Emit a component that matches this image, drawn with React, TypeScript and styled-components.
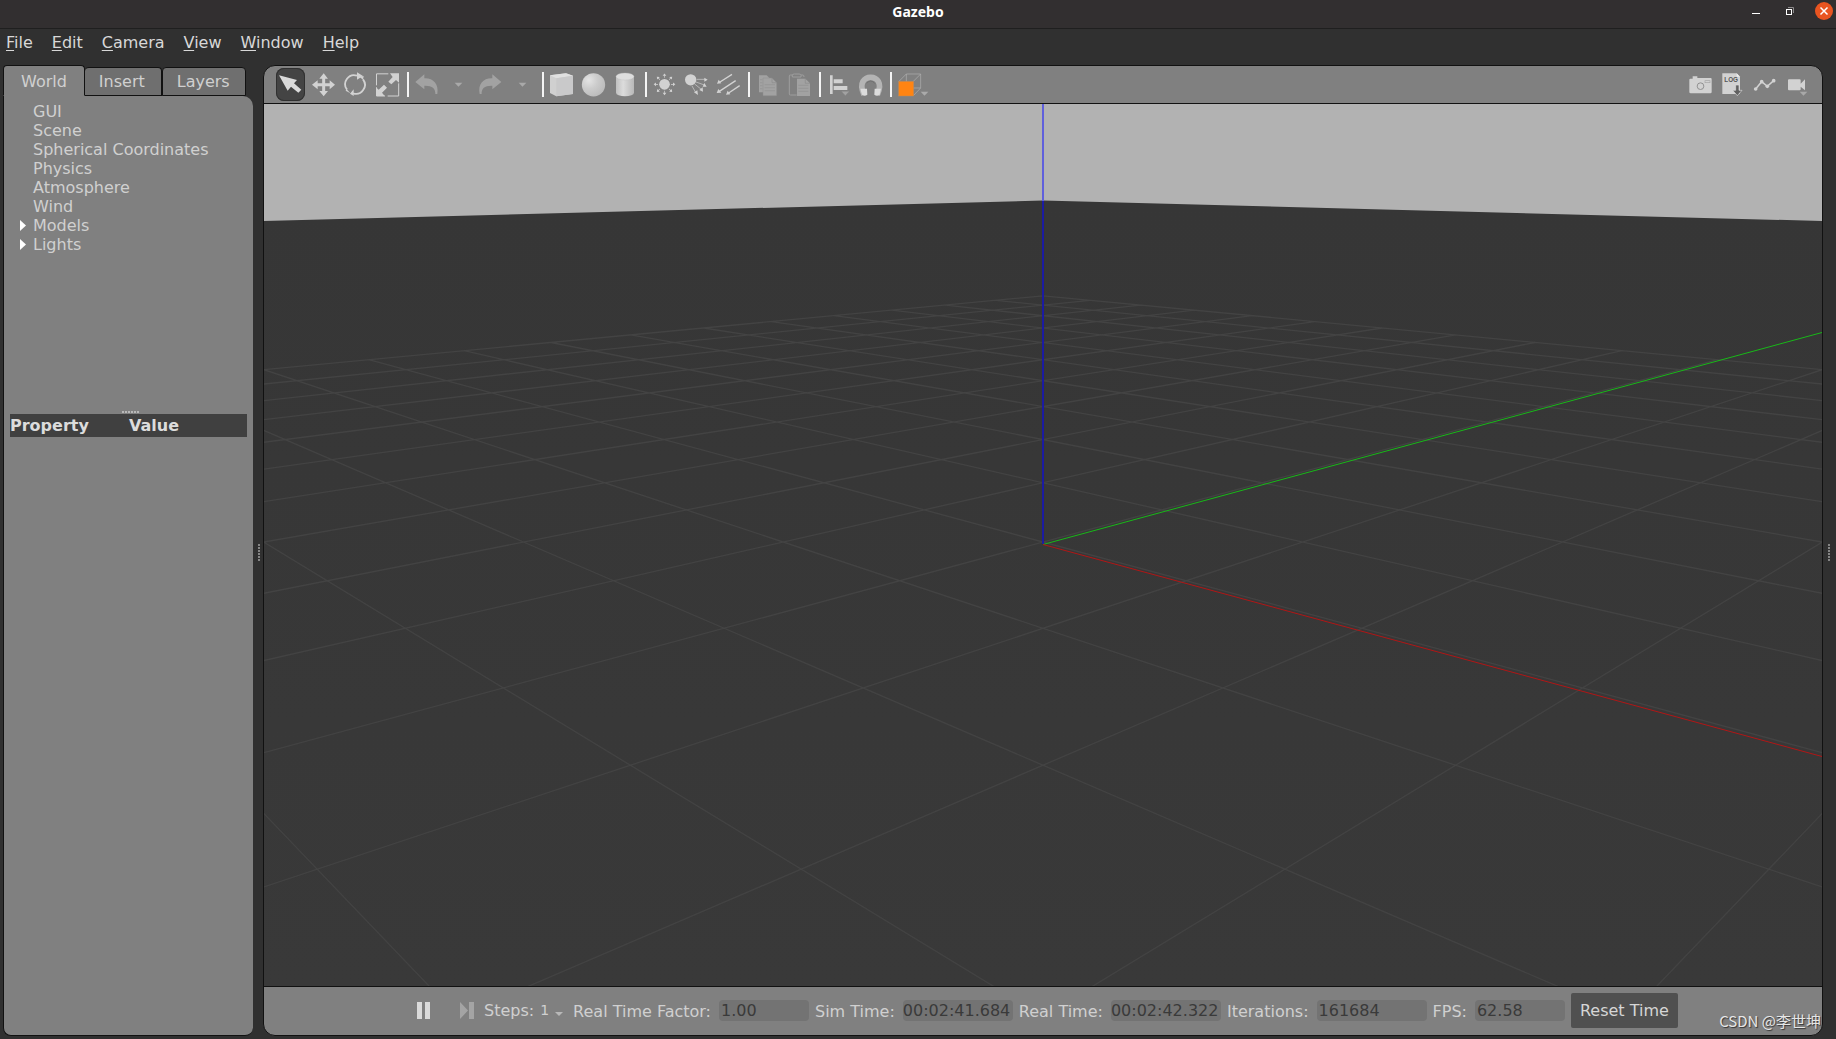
import React from "react";
import styled, { createGlobalStyle, css } from "styled-components";

const GlobalStyle = createGlobalStyle`
  *, *::before, *::after { box-sizing: border-box; }
  html, body { margin: 0; padding: 0; }
  body {
    background: #303030;
    color: #d0d0d0;
    font-family: "DejaVu Sans", sans-serif;
    font-size: 16px;
    line-height: 19px;
  }
  button, input {
    margin: 0;
    padding: 0;
    border: 0;
    background: none;
    color: inherit;
    font: inherit;
  }
  svg { display: block; flex: none; }
`;

const EDGE = "#111111";
const PANEL = "#808080";

/* ---------- window frame ---------- */

const Window = styled.div`
  display: flex;
  flex-direction: column;
  min-height: 100vh;
  background: #303030;
`;

const TitleBar = styled.header`
  display: grid;
  grid-template-columns: 1fr auto 1fr;
  height: 29px;
  padding-bottom: 8px;
  align-items: center;
  background: #322f30;
  border-bottom: 1px solid #1f1f1f;
`;

const Title = styled.h1`
  grid-column: 2;
  margin: 0;
  padding-top: 2px;
  color: #ffffff;
  font-family: "Noto Sans", sans-serif;
  font-size: 14px;
  font-weight: 700;
  line-height: 20px;
`;

const WindowControls = styled.div`
  display: flex;
  justify-content: flex-end;
  align-items: center;
  gap: 14px;
  padding-right: 2px;
`;

const WindowButton = styled.button`
  display: block;
  width: 20px;
  height: 20px;
`;

const MenuBar = styled.nav`
  display: flex;
  gap: 19px;
  height: 36px;
  padding: 2px 6px 0;
  align-items: flex-start;
`;

const MenuItem = styled.button`
  height: 22px;
  color: #d8d8d8;
  &::first-letter {
    text-decoration: underline;
    text-decoration-thickness: 1px;
    text-underline-offset: 2px;
  }
`;

const Body = styled.div`
  display: flex;
  flex: 1;
  padding: 0 0 3px 3px;
`;

/* ---------- left side ---------- */

const Side = styled.aside`
  display: flex;
  flex-direction: column;
  width: 250px;
  flex: none;
`;

const Tabs = styled.div`
  display: flex;
  align-items: flex-end;
  height: 31px;
`;

const Tab = styled.button<{ $active?: boolean; $first?: boolean }>`
  height: 29px;
  padding: 0 15px 0 14px;
  background: #6f6f6f;
  border: 1px solid ${EDGE};
  border-left-width: ${(p) => (p.$first ? 0 : 1)}px;
  border-radius: 4px 4px 0 0;
  ${(p) =>
    p.$first &&
    css`
      padding: 0 16px 0 14px;
    `}
  ${(p) =>
    p.$active &&
    css`
      height: 31px;
      padding: 2px 17px 0;
      background: ${PANEL};
      border-bottom-color: ${PANEL};
      border-left-width: 1px;
    `}
`;

const SidePanel = styled.div`
  display: flex;
  flex: 1;
  flex-direction: column;
  background: ${PANEL};
  border-left: 1px solid ${EDGE};
  border-bottom: 1px solid ${EDGE};
  border-radius: 0 10px 8px 8px;
  padding: 6px 6px 0;
`;

const Tree = styled.ul`
  height: 308px;
  margin: 0;
  padding: 0;
  list-style: none;
`;

const TreeRow = styled.li`
  display: grid;
  grid-template-columns: 13px 1fr;
  padding-left: 10px;
  height: 19px;
  align-items: center;
`;

const Expander = styled.button`
  width: 6px;
  height: 11px;
`;

const HandleDots = styled.div<{ $vertical?: boolean }>`
  width: ${(p) => (p.$vertical ? 2 : 17)}px;
  height: ${(p) => (p.$vertical ? 17 : 2)}px;
  background: repeating-linear-gradient(
    ${(p) => (p.$vertical ? "180deg" : "90deg")},
    ${(p) => (p.$vertical ? "#858585" : "#b8b8b8")} 0 2px,
    transparent 2px 3px
  );
`;

const RowSplitter = styled.div`
  display: flex;
  justify-content: center;
  height: 4px;
  padding: 1px 0 0 3px;
`;

const ColumnSplitter = styled.div<{ $width: number }>`
  display: flex;
  flex: none;
  align-items: center;
  width: ${(p) => p.$width}px;
  padding: 4px 0 0 5px;
`;

const Properties = styled.table`
  width: 100%;
  border-collapse: collapse;
  table-layout: fixed;
  background: #404040;
`;

const PropertyHead = styled.th<{ $wide?: boolean }>`
  width: ${(p) => (p.$wide ? "50%" : "119px")};
  height: 23px;
  padding: 0;
  color: #dcdcdc;
  font-weight: 700;
  text-align: left;
`;

/* ---------- main area ---------- */

const Main = styled.main`
  display: flex;
  flex: 1;
  min-width: 0;
  flex-direction: column;
  border: 1px solid ${EDGE};
  border-radius: 12px;
  overflow: hidden;
  background: ${PANEL};
`;

const ToolBar = styled.div`
  display: flex;
  align-items: center;
  height: 38px;
  padding: 0 9px 0 12px;
  border-bottom: 1px solid ${EDGE};
`;

const ToolButton = styled.button<{ $active?: boolean; $wide?: boolean }>`
  display: flex;
  flex: none;
  width: ${(p) => (p.$wide ? 36 : 32)}px;
  height: 33px;
  ${(p) =>
    p.$active &&
    css`
      width: 29px;
      margin-right: 3px;
      background: #444444;
      border-radius: 8px;
      box-shadow: inset 0 0 0 1px #303030;
    `}
`;

const Separator = styled.div`
  flex: none;
  width: 2px;
  height: 25px;
  margin: 0 2px 0 3px;
  background: #f4f4f4;
`;

const Spacer = styled.div`
  flex: 1;
`;

const Viewport = styled.div`
  display: flex;
  flex: 1;
  min-height: 200px;
  svg {
    flex: 1;
    width: 100%;
    height: auto;
    min-width: 0;
  }
`;

const StatusBar = styled.footer`
  position: relative;
  display: flex;
  align-items: center;
  gap: 6px;
  height: 49px;
  padding: 0 0 2px 144px;
  border-top: 1px solid ${EDGE};
  white-space: nowrap;
`;

const PlayButton = styled.button`
  width: 32px;
  height: 32px;
`;

const StepsButton = styled.button`
  display: flex;
  align-items: center;
  gap: 6px;
  margin-right: 4px;
`;

const StepCount = styled.span`
  font-size: 14px;
`;

const StatLabel = styled.label`
  padding: 2px 2px 0 0;
`;

const StatValue = styled.input<{ $width: number; $tight?: boolean }>`
  width: ${(p) => p.$width}px;
  height: 21px;
  padding: 0 ${(p) => (p.$tight ? 0 : 2)}px;
  background: #737373;
  border-radius: 4px;
  color: #3a3a3a;
`;

const ResetButton = styled.button`
  height: 35px;
  padding: 0 9px;
  background: #505050;
  border-radius: 2px;
  color: #d6d6d6;
`;

const Watermark = styled.span`
  position: absolute;
  right: 1px;
  bottom: 4px;
  color: #e6e6e6;
  font-family: "Noto Sans CJK SC", sans-serif;
  font-size: 15px;
  line-height: 20px;
  text-shadow: 1px 1px 1px #333333;
`;

/* ---------- icons ---------- */

const LIGHT = "#d2d2d2";
const DIM = "#a2a2a2";

const Icon = ({ x, y = 38, w = 32, children }: { x: number; y?: number; w?: number; children: React.ReactNode }) => (
  <svg width={w} height={33} viewBox={`${x} ${y} ${w * 3} 99`} aria-hidden="true">
    {children}
  </svg>
);

const CursorIcon = () => (
  <Icon x={63} w={29}>
    <path d="M72 60 L126 74 L117 84 L139 103 L130 112 L108 94 L98 106 Z" fill="#dadada" />
  </Icon>
);

const MoveIcon = () => (
  <Icon x={159}>
    <path
      d="M206 54 L219 70 H210.500 V84 H224 V75 L240 88.500 L224 102 V93 H210.500 V107 H219 L206 123 L193 107 H201.500 V93 H188 V102 L171 88.500 L188 75 V84 H201.500 V70 H193 Z"
      fill={LIGHT}
    />
  </Icon>
);

const RotateIcon = () => (
  <Icon x={255}>
    <g fill="none" stroke={LIGHT} strokeWidth="5.500">
      <path d="M276 103 A27 27 0 0 1 306 61" />
      <path d="M324 72 A27 27 0 0 1 294 114" />
    </g>
    <path d="M306 51 L324 62 L306 73 Z M296 102 L285 115 L296 122 Z" fill={LIGHT} />
    <path d="M313 64 L326 62 L324 73 Z" fill={LIGHT} />
    <path d="M274 100 L286 114 L272 106 Z" fill={LIGHT} />
  </Icon>
);

const ScaleIcon = () => (
  <Icon x={351}>
    <path d="M400 55.500 H364.500 V90 M364.500 96 V122 H390 M398 122 H431 V84 M431 122" fill="none" stroke={LIGHT} strokeWidth="3" />
    <path d="M432 54 V82 L423 74 L409 87 L400 79 L413 65 L405 54 Z" fill={LIGHT} />
    <path d="M363 122 V96 L371 103 L387 88 L396 97 L381 112 L389 122 Z" fill={LIGHT} />
  </Icon>
);

const UndoIcon = () => (
  <Icon x={468}>
    <path d="M481 80 L508 57 V69 C535 68 552 86 547 116 H541 C542 98 530 90 508 91 V102 Z" fill={DIM} />
  </Icon>
);

const RedoIcon = () => (
  <Icon x={660}>
    <path d="M739 80 L712 57 V69 C685 68 668 86 674 116 H680 C679 98 690 90 712 91 V102 Z" fill={DIM} />
  </Icon>
);

const CaretIcon = ({ x }: { x: number }) => (
  <Icon x={x}>
    <path d={`M${x + 35} 82 h23 l-11.500 12 Z`} fill="#a9a9a9" />
  </Icon>
);

const BoxIcon = () => (
  <Icon x={873}>
    <path d="M885 60 L933 54 L954 61 V116 L904 123 L885 113 Z" fill="#d0d0d0" />
    <path d="M885 60 L933 54 L954 61 L904 69 Z" fill="#e0e0e0" />
    <path d="M904 69 L954 61 V116 L904 123 Z" fill="#c9c9ca" />
  </Icon>
);

const SphereIcon = () => (
  <Icon x={969}>
    <defs>
      <radialGradient id="ball" cx="0.300" cy="0.300" r="0.750">
        <stop offset="0" stopColor="#e4e4e4" />
        <stop offset="0.500" stopColor="#cccccc" />
        <stop offset="1" stopColor="#bcbcbc" />
      </radialGradient>
    </defs>
    <circle cx="1015.500" cy="88.500" r="35" fill="url(#ball)" />
  </Icon>
);

const CylinderIcon = () => (
  <Icon x={30}>
    <defs>
      <linearGradient id="can">
        <stop offset="0" stopColor="#c0c0c0" />
        <stop offset="0.400" stopColor="#dcdcdc" />
        <stop offset="1" stopColor="#b8b8b8" />
      </linearGradient>
    </defs>
    <path d="M48 63 V112 A27 11 0 0 0 102 112 V63 Z" fill="url(#can)" />
    <ellipse cx="75" cy="63.500" rx="27" ry="10.500" fill="#dedede" stroke="#bdbdbd" />
  </Icon>
);

const SunIcon = () => (
  <Icon x={147}>
    <circle cx="193.500" cy="87" r="16" fill={LIGHT} />
    {[0, 45, 90, 135, 180, 225, 270, 315].map((a) => (
      <g key={a} transform={`rotate(${a} 193.500 87)`}>
        <path d="M213 86 H219 V81.500 L226 87 L219 92.500 V88 H213 Z" fill={LIGHT} />
      </g>
    ))}
  </Icon>
);

const SpotIcon = () => (
  <Icon x={243}>
    <circle cx="272" cy="73.500" r="17" fill={LIGHT} />
    <g stroke={LIGHT} strokeWidth="2">
      <path d="M290 72 H315 M288 80 L313 89 M284 86 L305 103 M276 92 L288 113" />
    </g>
    <path d="M313 67 L323 73 L313 79 Z M313 83 L320 94 L308 94 Z M308 96 L309 109 L298 104 Z M292 105 L294 119 L282 111 Z" fill={LIGHT} />
  </Icon>
);

const DirectionalIcon = () => (
  <Icon x={339}>
    <g stroke={LIGHT} strokeWidth="4">
      <path d="M360 80 L396 57 M358 108 L407 76 M386 113 L419 91" />
    </g>
    <path d="M351 85 L356 73 L364 84 Z M350 113 L355 101 L364 112 Z M378 118 L383 106 L391 117 Z" fill={LIGHT} />
  </Icon>
);

const CopyIcon = () => (
  <Icon x={456}>
    <path d="M477 60 H500 L508 68 V111 H477 Z" fill={DIM} />
    <path d="M489 68 H516 L530 82 V121 H489 Z" fill={DIM} stroke="#8c8c8c" strokeWidth="1.500" />
    <path d="M516 68 V82 H530" fill="none" stroke="#8c8c8c" strokeWidth="2" />
    <path d="M494 88 H525 M494 97 H525 M494 106 H525 M480 73 H487 M480 82 H487 M480 91 H487 M480 100 H487" stroke="#919191" strokeWidth="2" />
  </Icon>
);

const PasteIcon = () => (
  <Icon x={552}>
    <path d="M578 59 H571 Q568 59 568 62 V116 Q568 119 571 119 H590 M603 59 H609 Q612 59 612 65" fill="none" stroke={DIM} strokeWidth="2.500" />
    <path d="M577 65 V60 Q577 56 583 56 H597 Q603 56 603 60 V65 Z" fill="none" stroke={DIM} strokeWidth="2.500" />
    <path d="M591 70 H616 L630 84 V122 H591 Z" fill={DIM} />
    <path d="M616 70 V84 H630" fill="none" stroke="#8c8c8c" strokeWidth="2" />
    <path d="M595 90 H625 M595 99 H625 M595 108 H625" stroke="#919191" strokeWidth="2" />
  </Icon>
);

const AlignIcon = () => (
  <Icon x={669}>
    <path d="M690 60 H698 V116 H690 Z M701 72 H728 V84 H701 Z M701 92 H742 V104 H701 Z" fill={LIGHT} />
    <path d="M724 108 h24 l-12 13 Z" fill={DIM} stroke={PANEL} />
  </Icon>
);

const MagnetIcon = () => (
  <Icon x={765}>
    <path d="M792 118 C775 82 794 66 812 66 C830 66 849 82 832 118" fill="none" stroke="#b4b4b4" strokeWidth="17" />
    <path d="M781 100 L801 100 L802 118 Q794 124 786 118 Z M824 100 L843 100 L839 118 Q831 124 823 118 Z" fill="#dcdcdc" />
    <path d="M800 84 Q812 70 824 84" fill="none" stroke="#6a6a6a" strokeWidth="2" />
  </Icon>
);

const ViewIcon = () => (
  <Icon x={882} w={36}>
    <path d="M897 78 L919 56 H962 V98 L940 121 M940 78 L962 56 M919 56 V98 H962 M919 98 L897 121" fill="none" stroke="#b0b0b0" strokeWidth="2" />
    <rect x="896" y="78" width="45" height="44" fill="#ff8412" stroke="#b98a5c" strokeWidth="1.500" />
    <path d="M962 109 h23 l-11.500 12 Z" fill="#aaaaaa" />
  </Icon>
);

const CameraIcon = () => (
  <Icon x={135} y={203}>
    <path d="M148 238 Q148 235 151 235 H158 V228 H172 V233 H212 Q215 233 215 237 V275 Q215 279 211 279 H152 Q148 279 148 275 Z" fill={LIGHT} />
    <circle cx="181.500" cy="257.500" r="10" fill="none" stroke="#919191" strokeWidth="3" />
    <rect x="195" y="241" width="15" height="6" fill="none" stroke="#a4a4a4" strokeWidth="2" />
  </Icon>
);

const LogIcon = () => (
  <Icon x={231} y={203}>
    <path d="M247 219 H290 L300 229 V281 H247 Z" fill={LIGHT} />
    <path d="M290 219 V229 H300 Z" fill="#eeeeee" />
    <text x="253" y="245" fill="#555555" fontFamily="Liberation Sans, sans-serif" fontSize="19" fontWeight="700">
      LOG
    </text>
    <path d="M287 254 H297 V270 H306 L292 286 L278 270 H287 Z" fill="#606060" stroke="#dddddd" strokeWidth="2" />
  </Icon>
);

const PlotIcon = () => (
  <Icon x={327} y={203}>
    <path d="M347 266 L365 244 L382 258 L401 241" fill="none" stroke={LIGHT} strokeWidth="4.500" />
    <g fill={LIGHT}>
      <circle cx="347" cy="266" r="5.500" />
      <circle cx="365" cy="244" r="5.500" />
      <circle cx="382" cy="258" r="5.500" />
      <circle cx="401" cy="241" r="5.500" />
    </g>
  </Icon>
);

const VideoIcon = () => (
  <Icon x={423} y={203}>
    <path d="M444 240 Q444 237 447 237 H479 Q482 237 482 240 V250 L495 237 V270 L482 259 V267 Q482 270 479 270 H447 Q444 270 444 267 Z" fill={LIGHT} />
    <path d="M479 274 h23 l-11.500 12 Z" fill="#a8a8a8" />
  </Icon>
);

/* ---------- scene ---------- */

const SCENE_W = 1558;
const SCENE_H = 882;
const FOCAL = 1349;
const PITCH = 0.275643;
const CAMERA_DISTANCE = 5 * Math.SQRT2;
const CAMERA_HEIGHT = 1.986;
const NEAR = 0.2;

type Point = { side: number; down: number; depth: number };

/** Moves a point of the ground grid into camera space. */
function toCamera(a: number, b: number): Point {
  const ahead = (a + b) / Math.SQRT2 + CAMERA_DISTANCE;
  return {
    side: (a - b) / Math.SQRT2,
    down: CAMERA_HEIGHT * Math.cos(PITCH) - ahead * Math.sin(PITCH),
    depth: ahead * Math.cos(PITCH) + CAMERA_HEIGHT * Math.sin(PITCH),
  };
}

/** Cuts the part of a segment that lies behind the near plane. */
function clip(p: Point, q: Point): Point {
  if (p.depth >= NEAR) return p;
  const t = (NEAR - p.depth) / (q.depth - p.depth);
  return { side: p.side + (q.side - p.side) * t, down: p.down + (q.down - p.down) * t, depth: NEAR };
}

const project = (p: Point) =>
  `${(SCENE_W / 2 + (FOCAL * p.side) / p.depth).toFixed(1)} ${(440.5 + (FOCAL * p.down) / p.depth).toFixed(1)}`;

function gridPath() {
  const parts: string[] = [];
  for (let i = -10; i <= 10; i++) {
    for (const [p, q] of [
      [toCamera(i, -10), toCamera(i, 10)],
      [toCamera(-10, i), toCamera(10, i)],
    ]) {
      if (p.depth < NEAR && q.depth < NEAR) continue;
      parts.push(`M${project(clip(p, q))} L${project(clip(q, p))}`);
    }
  }
  return parts.join(" ");
}

const Scene = () => (
  <svg viewBox={`0 0 ${SCENE_W} ${SCENE_H}`} preserveAspectRatio="none" role="img" aria-label="World view">
    <defs>
      <linearGradient id="ground" x1="0" y1="0" x2="0" y2="1">
        <stop offset="0" stopColor="#363636" />
        <stop offset="1" stopColor="#393939" />
      </linearGradient>
    </defs>
    <rect width={SCENE_W} height={SCENE_H} fill="#b2b2b2" />
    <path d={`M0 117 L779 96.500 L1558 117 V${SCENE_H} H0 Z`} fill="url(#ground)" />
    <path d={gridPath()} fill="none" stroke="#434343" strokeWidth="1.300" />
    <path d="M779 0 V97" stroke="#5f5fdc" strokeWidth="2" />
    <path d="M779 97 V440" stroke="#1b1ba2" strokeWidth="2" />
    <path d="M779 440.500 L1558 228.500" stroke="#18b818" strokeWidth="1" />
    <path d="M779 440.500 L1558 652.500" stroke="#b01616" strokeWidth="1" />
  </svg>
);

/* ---------- application ---------- */

const MENUS = ["File", "Edit", "Camera", "View", "Window", "Help"];

const TREE = [
  { name: "GUI" },
  { name: "Scene" },
  { name: "Spherical Coordinates" },
  { name: "Physics" },
  { name: "Atmosphere" },
  { name: "Wind" },
  { name: "Models", open: true },
  { name: "Lights", open: true },
];

const STATS = [
  { id: "rtf", label: "Real Time Factor:", value: "1.00", width: 90 },
  { id: "sim", label: "Sim Time:", value: "00:02:41.684", width: 110, tight: true },
  { id: "real", label: "Real Time:", value: "00:02:42.322", width: 110, tight: true },
  { id: "iter", label: "Iterations:", value: "161684", width: 110 },
  { id: "fps", label: "FPS:", value: "62.58", width: 90 },
];

const TOOL_GROUPS: { name: string; icon: React.ReactNode; active?: boolean; wide?: boolean }[][] = [
  [
    { name: "Select", icon: <CursorIcon />, active: true },
    { name: "Translate", icon: <MoveIcon /> },
    { name: "Rotate", icon: <RotateIcon /> },
    { name: "Scale", icon: <ScaleIcon /> },
  ],
  [
    { name: "Undo", icon: <UndoIcon /> },
    { name: "Undo history", icon: <CaretIcon x={564} /> },
    { name: "Redo", icon: <RedoIcon /> },
    { name: "Redo history", icon: <CaretIcon x={756} /> },
  ],
  [
    { name: "Box", icon: <BoxIcon /> },
    { name: "Sphere", icon: <SphereIcon /> },
    { name: "Cylinder", icon: <CylinderIcon /> },
  ],
  [
    { name: "Point light", icon: <SunIcon /> },
    { name: "Spot light", icon: <SpotIcon /> },
    { name: "Directional light", icon: <DirectionalIcon /> },
  ],
  [
    { name: "Copy", icon: <CopyIcon /> },
    { name: "Paste", icon: <PasteIcon /> },
  ],
  [
    { name: "Align", icon: <AlignIcon /> },
    { name: "Snap", icon: <MagnetIcon /> },
  ],
  [{ name: "View angle", icon: <ViewIcon />, wide: true }],
];

export default function App() {
  return (
    <Window>
      <GlobalStyle />
      <TitleBar>
        <Title>Gazebo</Title>
        <WindowControls>
          <WindowButton aria-label="Minimize">
            <svg width="20" height="20" viewBox="0 0 20 20">
              <path d="M6 12.500 H14" stroke="#ffffff" />
            </svg>
          </WindowButton>
          <WindowButton aria-label="Restore">
            <svg width="20" height="20" viewBox="0 0 20 20">
              <path d="M8 6.500 H13.500 V12" fill="none" stroke="#8e8c8c" />
              <rect x="6.500" y="8.500" width="5" height="5" fill="none" stroke="#ffffff" />
            </svg>
          </WindowButton>
          <WindowButton aria-label="Close">
            <svg width="20" height="20" viewBox="0 0 20 20">
              <circle cx="10" cy="10" r="9" fill="#e95420" />
              <path d="M6.500 6.500 L13.500 13.500 M13.500 6.500 L6.500 13.500" stroke="#ffffff" strokeWidth="1.500" />
            </svg>
          </WindowButton>
        </WindowControls>
      </TitleBar>
      <MenuBar>
        {MENUS.map((m) => (
          <MenuItem key={m}>{m}</MenuItem>
        ))}
      </MenuBar>
      <Body>
        <Side>
          <Tabs role="tablist">
            <Tab role="tab" aria-selected="true" $active>
              World
            </Tab>
            <Tab role="tab" aria-selected="false" $first>
              Insert
            </Tab>
            <Tab role="tab" aria-selected="false">Layers</Tab>
          </Tabs>
          <SidePanel>
            <Tree>
              {TREE.map((row) => (
                <TreeRow key={row.name}>
                  {row.open ? (
                    <Expander aria-label={`Expand ${row.name}`}>
                      <svg width="6" height="11" viewBox="0 0 6 11">
                        <path d="M0 0 L6 5.500 L0 11 Z" fill="#ffffff" />
                      </svg>
                    </Expander>
                  ) : (
                    <span />
                  )}
                  <span>{row.name}</span>
                </TreeRow>
              ))}
            </Tree>
            <RowSplitter>
              <HandleDots />
            </RowSplitter>
            <Properties>
              <thead>
                <tr>
                  <PropertyHead>Property</PropertyHead>
                  <PropertyHead $wide>Value</PropertyHead>
                </tr>
              </thead>
            </Properties>
          </SidePanel>
        </Side>
        <ColumnSplitter $width={10}>
          <HandleDots $vertical />
        </ColumnSplitter>
        <Main>
          <ToolBar role="toolbar">
            {TOOL_GROUPS.map((group, i) => (
              <React.Fragment key={i}>
                {i > 0 && <Separator />}
                {group.map((t) => (
                  <ToolButton key={t.name} aria-label={t.name} $active={t.active} $wide={t.wide}>
                    {t.icon}
                  </ToolButton>
                ))}
              </React.Fragment>
            ))}
            <Spacer />
            <ToolButton aria-label="Screenshot">
              <CameraIcon />
            </ToolButton>
            <ToolButton aria-label="Log">
              <LogIcon />
            </ToolButton>
            <ToolButton aria-label="Plot">
              <PlotIcon />
            </ToolButton>
            <ToolButton aria-label="Record video">
              <VideoIcon />
            </ToolButton>
          </ToolBar>
          <Viewport>
            <Scene />
          </Viewport>
          <StatusBar>
            <PlayButton aria-label="Pause">
              <svg width="32" height="32" viewBox="0 0 32 32">
                <path d="M9 8 H14 V25 H9 Z M17 8 H22 V25 H17 Z" fill="#dadada" />
              </svg>
            </PlayButton>
            <PlayButton aria-label="Step">
              <svg width="32" height="32" viewBox="0 0 32 32">
                <path d="M14 8 L22 16.500 L14 25 Z M23 8 H28 V25 H23 Z" fill="#a4a4a4" />
              </svg>
            </PlayButton>
            <StepsButton>
              Steps: <StepCount>1</StepCount>
              <svg width="8" height="12" viewBox="0 0 8 12">
                <path d="M0 8 H8 L4 12 Z" fill="#b8b8b8" />
              </svg>
            </StepsButton>
            {STATS.map((s) => (
              <React.Fragment key={s.id}>
                <StatLabel htmlFor={s.id}>{s.label}</StatLabel>
                <StatValue id={s.id} $width={s.width} $tight={s.tight} value={s.value} readOnly />
              </React.Fragment>
            ))}
            <ResetButton>Reset Time</ResetButton>
            <Watermark>CSDN @李世坤</Watermark>
          </StatusBar>
        </Main>
        <ColumnSplitter $width={13}>
          <HandleDots $vertical />
        </ColumnSplitter>
      </Body>
    </Window>
  );
}
